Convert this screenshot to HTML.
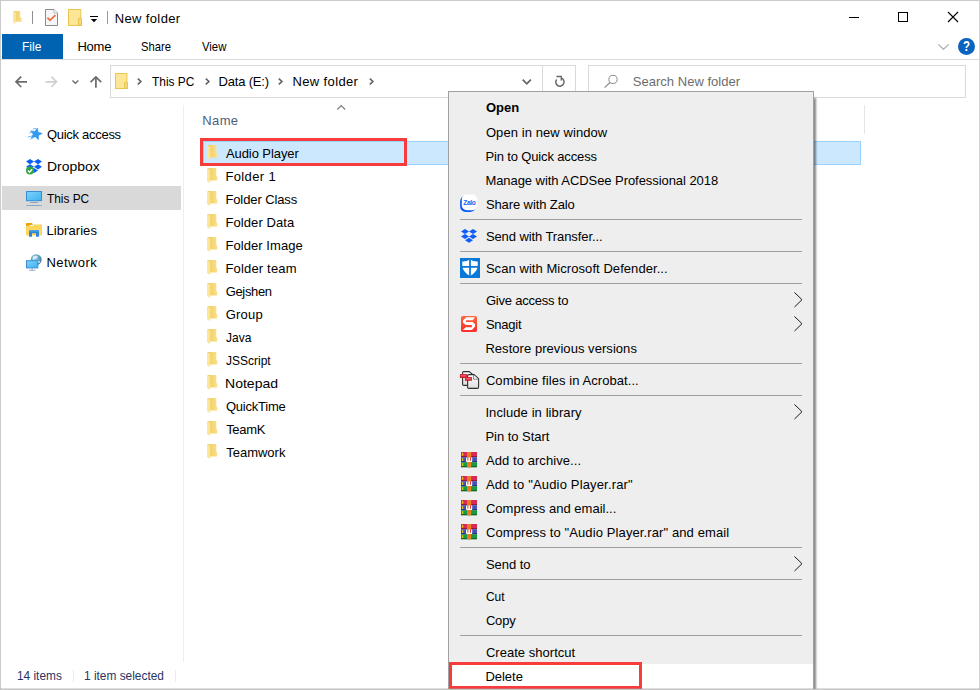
<!DOCTYPE html>
<html lang="en">
<head>
<meta charset="utf-8">
<title>New folder</title>
<style>
html,body{margin:0;padding:0;}
body{width:980px;height:690px;position:relative;overflow:hidden;background:#fff;
  font-family:"Liberation Sans",sans-serif;font-size:13px;color:#000;}
.a{position:absolute;}
.t{position:absolute;white-space:pre;font-size:13px;line-height:16px;color:#000;transform-origin:0 50%;}
.t.w{color:#fff;}
.t.g{color:#6d6d6d;}
.t.h{color:#4c607a;}
.t.s{color:#2a3563;}
.t.b{font-weight:bold;}
svg{position:absolute;overflow:visible;}
.sep{position:absolute;left:460px;width:342px;height:1px;background:#a0a0a0;}
</style>
</head>
<body>
<!-- window frame -->
<div class="a" style="left:0;top:0;width:980px;height:1px;background:#cbcbcb"></div>
<div class="a" style="left:0;top:0;width:1px;height:690px;background:#cbcbcb"></div>
<div class="a" style="left:979px;top:0;width:1px;height:690px;background:#d4d4d4"></div>

<!-- ribbon -->
<div class="a" style="left:2px;top:34px;width:61px;height:25px;background:#0063b1"></div>
<div class="a" style="left:1px;top:59px;width:978px;height:1px;background:#dadbdc"></div>

<!-- address bar -->
<div class="a" style="left:110px;top:65px;width:464px;height:31px;border:1px solid #d9d9d9;box-sizing:content-box"></div>
<div class="a" style="left:542px;top:66px;width:1px;height:31px;background:#d9d9d9"></div>
<div class="a" style="left:588px;top:65px;width:376px;height:31px;border:1px solid #d9d9d9"></div>

<!-- nav pane -->
<div class="a" style="left:2px;top:186px;width:179px;height:24px;background:#d9d9d9"></div>
<div class="a" style="left:183px;top:105px;width:1px;height:557px;background:#eeeeee"></div>

<!-- list header -->
<div class="a" style="left:864px;top:105px;width:1px;height:29px;background:#e5e5e5"></div>

<!-- selected row -->
<div class="a" style="left:203px;top:141px;width:658px;height:24px;background:#cce8ff;border:1px solid #99d1ff;box-sizing:border-box"></div>
<div class="a" style="left:200px;top:138px;width:207px;height:28px;border:3px solid #f83c3c;box-sizing:border-box"></div>

<!-- status bar -->
<div class="a" style="left:73px;top:670px;width:1px;height:12px;background:#ebebeb"></div>
<div class="a" style="left:175px;top:670px;width:1px;height:12px;background:#ebebeb"></div>

<!-- context menu -->
<div class="a" id="menu" style="left:448px;top:91px;width:366px;height:620px;background:#eeeeee;border:1px solid #a0a0a0;box-sizing:border-box;box-shadow:2.5px 6px 2px -0.5px rgba(0,0,0,0.47)"></div>
<div class="a" style="left:449px;top:664px;width:364px;height:25px;background:#fff"></div>
<div class="sep" style="top:219px"></div>
<div class="sep" style="top:251px"></div>
<div class="sep" style="top:283px"></div>
<div class="sep" style="top:363px"></div>
<div class="sep" style="top:395px"></div>
<div class="sep" style="top:547px"></div>
<div class="sep" style="top:579px"></div>
<div class="sep" style="top:635px"></div>
<div class="a" style="left:449px;top:662px;width:193px;height:27px;border:3px solid #f83c3c;box-sizing:border-box"></div>

<!-- bottom frame -->
<div class="a" style="left:0;top:689px;width:980px;height:1px;background:#c6c6c6"></div>
<div class="a" style="left:0;top:688px;width:980px;height:1px;background:rgba(160,160,160,0.35)"></div>

<svg width="0" height="0" style="position:absolute">
<defs>
<linearGradient id="gfb" x1="0" y1="0" x2="1" y2="0"><stop offset="0" stop-color="#eecb62"/><stop offset="1" stop-color="#fce088"/></linearGradient>
<linearGradient id="gmon" x1="0" y1="0" x2="1" y2="1"><stop offset="0" stop-color="#7fd4fb"/><stop offset="1" stop-color="#3fb0ef"/></linearGradient>
<linearGradient id="gsn" x1="0" y1="0" x2="0" y2="1"><stop offset="0" stop-color="#ff663c"/><stop offset="1" stop-color="#ff2b2b"/></linearGradient>
<linearGradient id="gdoc" x1="0" y1="0" x2="0" y2="1"><stop offset="0" stop-color="#ffffff"/><stop offset="1" stop-color="#dcdcdc"/></linearGradient>
<radialGradient id="gglobe" cx="0.4" cy="0.35" r="0.7"><stop offset="0" stop-color="#a8d8ee"/><stop offset="1" stop-color="#2a6f9f"/></radialGradient>
</defs>
</svg>

<!-- title bar icons -->
<svg style="left:12.5px;top:10.9px" width="9" height="14" viewBox="0 0 9 14">
  <path d="M0.2,0 L7.2,0 L7.2,6.6 L8.7,6.6 L8.7,10.8 L2.3,10.8 L2.3,1.8 Z" fill="url(#gfb)"/>
  <path d="M0,0.1 L2.5,2 L2.5,13.1 L0,11.2 Z" fill="#fbe597"/>
</svg>
<div class="a" style="left:32px;top:11px;width:1px;height:13px;background:#8f8f8f"></div>
<svg style="left:45px;top:9px" width="13" height="17" viewBox="0 0 13 17">
  <path d="M0.5,0.5 L9,0.5 L12.5,4 L12.5,16.5 L0.5,16.5 Z" fill="#f5f6f8" stroke="#8a8a8a" stroke-width="1"/>
  <path d="M9,0.5 L9,4 L12.5,4" fill="#fff" stroke="#a8a8a8" stroke-width="0.8"/>
  <path d="M2.4,8.6 L5,11.3 L10.4,6.1" fill="none" stroke="#f0703a" stroke-width="1.8"/>
</svg>
<svg style="left:68px;top:9px" width="14" height="17" viewBox="0 0 14 17">
  <rect x="0.5" y="0.5" width="12.3" height="16" fill="#fde796" stroke="#e9c650" stroke-width="1"/>
  <path d="M10.4,16.5 L10.4,10.2 Q10.4,9 11.6,9 L12.4,9 Q13.5,9 13.5,10.2 L13.5,16.5 Z" fill="#f6d978" stroke="#e3be48" stroke-width="0.9"/>
</svg>
<div class="a" style="left:90px;top:16px;width:8px;height:1px;background:#000"></div>
<svg style="left:90px;top:18px" width="8" height="5" viewBox="0 0 8 5"><path d="M0.8,0.9 L7.2,0.9 L4,4.2 Z" fill="#000"/></svg>
<div class="a" style="left:107px;top:11px;width:1px;height:13px;background:#9a9a9a"></div>

<!-- window controls -->
<div class="a" style="left:849px;top:17px;width:10px;height:1px;background:#000"></div>
<div class="a" style="left:898px;top:12px;width:10px;height:10px;border:1px solid #000;box-sizing:border-box"></div>
<svg style="left:948px;top:12px" width="10" height="10" viewBox="0 0 10 10"><path d="M0,0 L10,10 M10,0 L0,10" stroke="#000" stroke-width="1.1" fill="none"/></svg>
<svg style="left:938px;top:44px" width="11" height="6" viewBox="0 0 11 6"><path d="M0.3,0.3 L5.5,5.2 L10.7,0.3" stroke="#a6a6a6" stroke-width="1.1" fill="none"/></svg>
<div class="a" style="left:958px;top:38px;width:17px;height:17px;border-radius:50%;background:#0b63c0"></div>
<span class="t w b" style="left:963px;top:38px;font-size:14px;transform:scaleX(0.82)">?</span>

<!-- nav arrows -->
<svg style="left:15px;top:76px" width="13" height="12" viewBox="0 0 13 12"><path d="M12,5.8 L1.2,5.8 M6.2,0.6 L1,5.8 L6.2,11" fill="none" stroke="#6b6b6b" stroke-width="1.7"/></svg>
<svg style="left:45px;top:76px" width="13" height="12" viewBox="0 0 13 12"><path d="M0.5,5.8 L11.3,5.8 M6.3,0.6 L11.5,5.8 L6.3,11" fill="none" stroke="#d0d0d0" stroke-width="1.7"/></svg>
<svg style="left:72px;top:79.5px" width="7" height="4" viewBox="0 0 7 4"><path d="M0.4,0.4 L3.4,3.2 L6.4,0.4" fill="none" stroke="#6e6e6e" stroke-width="1.4"/></svg>
<svg style="left:90px;top:76px" width="12" height="12" viewBox="0 0 12 12"><path d="M5.9,11.8 L5.9,1 M0.6,6.2 L5.9,0.9 L11.2,6.2" fill="none" stroke="#6b6b6b" stroke-width="1.7"/></svg>

<!-- address bar icons -->
<svg style="left:115px;top:73px" width="13" height="16" viewBox="0 0 13 16">
  <rect x="0.5" y="0.5" width="11.4" height="15" fill="#fde796" stroke="#e9c650" stroke-width="1"/>
  <path d="M9.7,15.5 L9.7,10 Q9.7,9 10.7,9 L11.5,9 Q12.5,9 12.5,10 L12.5,15.5 Z" fill="#f6d978" stroke="#e3be48" stroke-width="0.9"/>
</svg>
<svg style="left:137px;top:78px" width="5" height="7" viewBox="0 0 5 7"><path d="M0.8,0.6 L3.9,3.5 L0.8,6.4" fill="none" stroke="#626262" stroke-width="1.6"/></svg>
<svg style="left:204.7px;top:78px" width="5" height="7" viewBox="0 0 5 7"><path d="M0.8,0.6 L3.9,3.5 L0.8,6.4" fill="none" stroke="#626262" stroke-width="1.6"/></svg>
<svg style="left:278.3px;top:78px" width="5" height="7" viewBox="0 0 5 7"><path d="M0.8,0.6 L3.9,3.5 L0.8,6.4" fill="none" stroke="#626262" stroke-width="1.6"/></svg>
<svg style="left:368.6px;top:78px" width="5" height="7" viewBox="0 0 5 7"><path d="M0.8,0.6 L3.9,3.5 L0.8,6.4" fill="none" stroke="#626262" stroke-width="1.6"/></svg>
<svg style="left:522px;top:79px" width="10" height="6" viewBox="0 0 10 6"><path d="M0.7,0.7 L4.8,4.8 L8.9,0.7" fill="none" stroke="#686868" stroke-width="1.85"/></svg>
<svg style="left:554px;top:75px" width="12" height="12" viewBox="0 0 12 12"><path d="M7.45,3.15 A4.15,4.15 0 1 1 2.63,4.45" fill="none" stroke="#6a6a6a" stroke-width="1.5"/><path d="M2.4,1.5 L7.3,1.5 L7.3,5.4" fill="none" stroke="#6a6a6a" stroke-width="1.4"/></svg>
<svg style="left:604px;top:74px" width="14" height="14" viewBox="0 0 14 14"><circle cx="9" cy="5.4" r="4.1" fill="none" stroke="#8a8a8a" stroke-width="1"/><path d="M6,8.5 L0.6,13.6" stroke="#8a8a8a" stroke-width="1.1"/></svg>

<!-- sort arrow -->
<svg style="left:336.5px;top:105px" width="9" height="5" viewBox="0 0 9 5"><path d="M0.3,4.5 L4.2,0.6 L8.1,4.5" fill="none" stroke="#7c7c7c" stroke-width="1.1"/></svg>

<!-- nav pane icons -->
<svg style="left:27px;top:127px" width="16" height="14" viewBox="0 0 16 14">
  <path d="M10.39,0.96 L11.15,5.13 L15.18,6.46 L11.44,8.47 L11.42,12.71 L8.36,9.78 L4.32,11.07 L6.16,7.25 L3.69,3.81 L7.89,4.38 Z" fill="#2f9bf2" stroke="#2487e2" stroke-width="0.5"/>
  <path d="M5.8,2 L9,1.5 M2.4,5.9 L5.8,5.3 M0.8,10 L4.8,9.1 M3.2,12.2 L6,11" stroke="#63b3f5" stroke-width="0.9" fill="none"/>
</svg>
<svg style="left:26px;top:158.6px" width="16" height="16" viewBox="0 0 16 16">
  <path d="M4,0 L8,2.6 L4,5.2 L0,2.6 Z M12,0 L16,2.6 L12,5.2 L8,2.6 Z M4,5.2 L8,7.8 L4,10.4 L0,7.8 Z M12,5.2 L16,7.8 L12,10.4 L8,7.8 Z M8,8.9 L12,11.5 L8,14.1 L4,11.5 Z" fill="#0d5ffa"/>
  <circle cx="4" cy="11.6" r="4" fill="#2fa53c"/>
  <path d="M1.9,11.6 L3.5,13.2 L6.2,10.2" fill="none" stroke="#fff" stroke-width="1.4"/>
</svg>
<svg style="left:26px;top:191px" width="16" height="15" viewBox="0 0 16 15">
  <rect x="0.5" y="0.5" width="15" height="9.2" fill="url(#gmon)" stroke="#3a8fd4" stroke-width="1"/>
  <rect x="4.2" y="11" width="7.6" height="1" fill="#8aa7c6"/>
  <rect x="0.3" y="14" width="15.4" height="1" fill="#8aa7c6"/>
</svg>
<svg style="left:26px;top:223px" width="16" height="14" viewBox="0 0 16 14">
  <path d="M0,0 L5.8,0 L7.2,1.6 L0,3.4 Z" fill="#e5a50a"/>
  <path d="M0,3 L6.6,3 L8,1.6 L16,1.6 L16,12.4 L0,12.4 Z" fill="#ffd65c"/>
  <path d="M3,13.8 L3,7 L13,7 L13,13.8 L10,13.8 L10,10.2 L6,10.2 L6,13.8 Z" fill="#2f86d8"/>
  <rect x="3" y="7" width="10" height="1.5" fill="#4fa3ea"/>
</svg>
<svg style="left:26px;top:253.5px" width="16" height="17" viewBox="0 0 16 17">
  <circle cx="10.2" cy="5.6" r="5.4" fill="url(#gglobe)"/>
  <path d="M7,2.6 Q9.4,1 11.8,2.2 Q11.4,4.4 9.2,4.4 Q8.6,6 6.6,5.8 Z M11.4,6.2 Q13.6,6.4 14.4,8.2 Q12.6,10 11,8.4 Z" fill="#e4f4fb" opacity="0.8"/>
  <rect x="0.5" y="6.7" width="11.3" height="7.2" fill="url(#gmon)" stroke="#3a8fd4" stroke-width="1"/>
  <rect x="5.4" y="14.2" width="1.4" height="1.6" fill="#8aa7c6"/>
  <rect x="3" y="15.8" width="6.4" height="0.9" fill="#8aa7c6"/>
</svg>

<!-- menu icons -->
<svg style="left:459px;top:194px" width="20" height="19" viewBox="0 0 20 19">
  <rect x="1.1" y="1.8" width="15.6" height="16.2" rx="5.6" fill="#0a5cf5"/>
  <rect x="2.8" y="0.5" width="15.6" height="15.7" rx="5" fill="#fff"/>
  <text x="10.4" y="10.9" font-family="Liberation Sans, sans-serif" font-weight="bold" font-size="6.6" fill="#1465f5" text-anchor="middle" letter-spacing="-0.3">Zalo</text>
</svg>
<svg style="left:461px;top:229px" width="16" height="14" viewBox="0 0 16 14">
  <path d="M4,0 L8,2.5 L4,5 L0,2.5 Z M12,0 L16,2.5 L12,5 L8,2.5 Z M4,5 L8,7.5 L4,10 L0,7.5 Z M12,5 L16,7.5 L12,10 L8,7.5 Z M8,8.7 L12,11.2 L8,13.7 L4,11.2 Z" fill="#0d5ffa"/>
</svg>
<svg style="left:460px;top:258px" width="20" height="20" viewBox="0 0 20 20">
  <rect x="0" y="0" width="20" height="20" fill="#0a78d6"/>
  <path d="M10,1.6 Q13.5,3.7 17.7,3.4 L17.7,8 Q17.4,14 10,17.9 Q2.6,14 2.3,8 L2.3,3.4 Q6.5,3.7 10,1.6 Z" fill="#fff"/>
  <path d="M10,1.2 L10,18.4 M1.8,8.9 L18.2,8.9" stroke="#0a78d6" stroke-width="1.75"/>
</svg>
<svg style="left:461px;top:316px" width="16" height="16" viewBox="0 0 16 16">
  <rect x="0" y="0" width="16" height="16" rx="1.7" fill="url(#gsn)"/>
  <path d="M5.2,1.3 L14,1.3 L11.7,4.35 L5,4.35 L5,5.9 L11.8,5.9 L14,8.2 L14,10.6 L11,14.1 L1.8,14.1 L4.7,11.3 L10.9,11.3 L10.9,9.1 L4.7,9.1 L2,6.6 L2,4.4 Z" fill="#fff"/>
</svg>
<svg style="left:455px;top:366px" width="30" height="28" viewBox="0 0 30 28">
  <path d="M8.8,5.6 L14.2,5.6 L17.4,8.2 L17.4,19.4 L8.8,19.4 Q7.6,19.4 7.6,18.2 L7.6,6.8 Q7.6,5.6 8.8,5.6 Z" fill="url(#gdoc)" stroke="#2e2e2e" stroke-width="1.1"/>
  <path d="M13.8,8.6 L19,8.6 L23.6,12.8 L23.6,21.2 Q23.6,22.4 22.4,22.4 L13.8,22.4 Q12.6,22.4 12.6,21.2 L12.6,9.8 Q12.6,8.6 13.8,8.6 Z" fill="url(#gdoc)" stroke="#2e2e2e" stroke-width="1.1"/>
  <path d="M18.6,9 L18.6,13.1 L23.2,13.1" fill="#fff" stroke="#666" stroke-width="0.8"/>
  <rect x="4.9" y="8.1" width="7.3" height="3.9" fill="#cf1f2e"/>
  <rect x="9.9" y="11" width="7" height="3.8" fill="#cf1f2e"/>
  <rect x="5.7" y="9" width="5.6" height="1.5" fill="#ee5a66"/>
  <rect x="10.7" y="11.9" width="5.4" height="1.5" fill="#ee5a66"/>
</svg>
<svg style="left:461px;top:452px" width="16" height="15" viewBox="0 0 16 15"><rect x="0" y="0" width="16" height="5" fill="#d32c57"/>
  <rect x="0" y="4.3" width="16" height="0.9" fill="#7c1230"/>
  <rect x="0" y="5.2" width="16" height="5" fill="#4b50b8"/>
  <rect x="0" y="9.3" width="16" height="0.9" fill="#23256e"/>
  <rect x="0" y="10.2" width="16" height="5" fill="#159c40"/>
  <rect x="0" y="14.3" width="16" height="0.9" fill="#0a5a1f"/>
  <rect x="6" y="0" width="4.2" height="15.2" fill="#f0781f"/>
  <rect x="5" y="5.6" width="6.2" height="4.4" rx="0.8" fill="#fff"/>
  <rect x="6.4" y="5.2" width="0.9" height="3.6" fill="#e03010"/><rect x="9" y="5.2" width="0.9" height="3.6" fill="#e03010"/>
  <rect x="1.2" y="1" width="1" height="2.8" fill="#ffd800"/><rect x="1.2" y="6.2" width="1" height="2.8" fill="#ffd800"/><rect x="1.2" y="11.2" width="1" height="2.8" fill="#ffd800"/></svg>
<svg style="left:461px;top:476px" width="16" height="15" viewBox="0 0 16 15"><rect x="0" y="0" width="16" height="5" fill="#d32c57"/>
  <rect x="0" y="4.3" width="16" height="0.9" fill="#7c1230"/>
  <rect x="0" y="5.2" width="16" height="5" fill="#4b50b8"/>
  <rect x="0" y="9.3" width="16" height="0.9" fill="#23256e"/>
  <rect x="0" y="10.2" width="16" height="5" fill="#159c40"/>
  <rect x="0" y="14.3" width="16" height="0.9" fill="#0a5a1f"/>
  <rect x="6" y="0" width="4.2" height="15.2" fill="#f0781f"/>
  <rect x="5" y="5.6" width="6.2" height="4.4" rx="0.8" fill="#fff"/>
  <rect x="6.4" y="5.2" width="0.9" height="3.6" fill="#e03010"/><rect x="9" y="5.2" width="0.9" height="3.6" fill="#e03010"/>
  <rect x="1.2" y="1" width="1" height="2.8" fill="#ffd800"/><rect x="1.2" y="6.2" width="1" height="2.8" fill="#ffd800"/><rect x="1.2" y="11.2" width="1" height="2.8" fill="#ffd800"/></svg>
<svg style="left:461px;top:500px" width="16" height="15" viewBox="0 0 16 15"><rect x="0" y="0" width="16" height="5" fill="#d32c57"/>
  <rect x="0" y="4.3" width="16" height="0.9" fill="#7c1230"/>
  <rect x="0" y="5.2" width="16" height="5" fill="#4b50b8"/>
  <rect x="0" y="9.3" width="16" height="0.9" fill="#23256e"/>
  <rect x="0" y="10.2" width="16" height="5" fill="#159c40"/>
  <rect x="0" y="14.3" width="16" height="0.9" fill="#0a5a1f"/>
  <rect x="6" y="0" width="4.2" height="15.2" fill="#f0781f"/>
  <rect x="5" y="5.6" width="6.2" height="4.4" rx="0.8" fill="#fff"/>
  <rect x="6.4" y="5.2" width="0.9" height="3.6" fill="#e03010"/><rect x="9" y="5.2" width="0.9" height="3.6" fill="#e03010"/>
  <rect x="1.2" y="1" width="1" height="2.8" fill="#ffd800"/><rect x="1.2" y="6.2" width="1" height="2.8" fill="#ffd800"/><rect x="1.2" y="11.2" width="1" height="2.8" fill="#ffd800"/></svg>
<svg style="left:461px;top:524px" width="16" height="15" viewBox="0 0 16 15"><rect x="0" y="0" width="16" height="5" fill="#d32c57"/>
  <rect x="0" y="4.3" width="16" height="0.9" fill="#7c1230"/>
  <rect x="0" y="5.2" width="16" height="5" fill="#4b50b8"/>
  <rect x="0" y="9.3" width="16" height="0.9" fill="#23256e"/>
  <rect x="0" y="10.2" width="16" height="5" fill="#159c40"/>
  <rect x="0" y="14.3" width="16" height="0.9" fill="#0a5a1f"/>
  <rect x="6" y="0" width="4.2" height="15.2" fill="#f0781f"/>
  <rect x="5" y="5.6" width="6.2" height="4.4" rx="0.8" fill="#fff"/>
  <rect x="6.4" y="5.2" width="0.9" height="3.6" fill="#e03010"/><rect x="9" y="5.2" width="0.9" height="3.6" fill="#e03010"/>
  <rect x="1.2" y="1" width="1" height="2.8" fill="#ffd800"/><rect x="1.2" y="6.2" width="1" height="2.8" fill="#ffd800"/><rect x="1.2" y="11.2" width="1" height="2.8" fill="#ffd800"/></svg>

<!-- submenu arrows -->
<svg style="left:793.5px;top:291.6px" width="9" height="16" viewBox="0 0 9 16"><path d="M0.5,0.5 L8,7.7 L0.5,15" fill="none" stroke="#1a1a1a" stroke-width="1"/></svg>
<svg style="left:793.5px;top:315.6px" width="9" height="16" viewBox="0 0 9 16"><path d="M0.5,0.5 L8,7.7 L0.5,15" fill="none" stroke="#1a1a1a" stroke-width="1"/></svg>
<svg style="left:793.5px;top:403.6px" width="9" height="16" viewBox="0 0 9 16"><path d="M0.5,0.5 L8,7.7 L0.5,15" fill="none" stroke="#1a1a1a" stroke-width="1"/></svg>
<svg style="left:793.5px;top:555.6px" width="9" height="16" viewBox="0 0 9 16"><path d="M0.5,0.5 L8,7.7 L0.5,15" fill="none" stroke="#1a1a1a" stroke-width="1"/></svg>

<!-- file icons -->
<svg style="left:207px;top:144.75px" width="11" height="16" viewBox="0 0 11 16"><path d="M0.2,0 L9.3,0 L9.3,8.2 L10.2,8.2 L10.2,12.4 L3,12.4 L3,2.2 Z" fill="url(#gfb)"/>
  <path d="M0,0.1 L3.2,2.4 L3.2,15.2 L0,12.9 Z" fill="#fbe597"/></svg>
<svg style="left:207px;top:167.75px" width="11" height="16" viewBox="0 0 11 16"><path d="M0.2,0 L9.3,0 L9.3,8.2 L10.2,8.2 L10.2,12.4 L3,12.4 L3,2.2 Z" fill="url(#gfb)"/>
  <path d="M0,0.1 L3.2,2.4 L3.2,15.2 L0,12.9 Z" fill="#fbe597"/></svg>
<svg style="left:207px;top:190.75px" width="11" height="16" viewBox="0 0 11 16"><path d="M0.2,0 L9.3,0 L9.3,8.2 L10.2,8.2 L10.2,12.4 L3,12.4 L3,2.2 Z" fill="url(#gfb)"/>
  <path d="M0,0.1 L3.2,2.4 L3.2,15.2 L0,12.9 Z" fill="#fbe597"/></svg>
<svg style="left:207px;top:213.75px" width="11" height="16" viewBox="0 0 11 16"><path d="M0.2,0 L9.3,0 L9.3,8.2 L10.2,8.2 L10.2,12.4 L3,12.4 L3,2.2 Z" fill="url(#gfb)"/>
  <path d="M0,0.1 L3.2,2.4 L3.2,15.2 L0,12.9 Z" fill="#fbe597"/></svg>
<svg style="left:207px;top:236.75px" width="11" height="16" viewBox="0 0 11 16"><path d="M0.2,0 L9.3,0 L9.3,8.2 L10.2,8.2 L10.2,12.4 L3,12.4 L3,2.2 Z" fill="url(#gfb)"/>
  <path d="M0,0.1 L3.2,2.4 L3.2,15.2 L0,12.9 Z" fill="#fbe597"/></svg>
<svg style="left:207px;top:259.75px" width="11" height="16" viewBox="0 0 11 16"><path d="M0.2,0 L9.3,0 L9.3,8.2 L10.2,8.2 L10.2,12.4 L3,12.4 L3,2.2 Z" fill="url(#gfb)"/>
  <path d="M0,0.1 L3.2,2.4 L3.2,15.2 L0,12.9 Z" fill="#fbe597"/></svg>
<svg style="left:207px;top:282.75px" width="11" height="16" viewBox="0 0 11 16"><path d="M0.2,0 L9.3,0 L9.3,8.2 L10.2,8.2 L10.2,12.4 L3,12.4 L3,2.2 Z" fill="url(#gfb)"/>
  <path d="M0,0.1 L3.2,2.4 L3.2,15.2 L0,12.9 Z" fill="#fbe597"/></svg>
<svg style="left:207px;top:305.75px" width="11" height="16" viewBox="0 0 11 16"><path d="M0.2,0 L9.3,0 L9.3,8.2 L10.2,8.2 L10.2,12.4 L3,12.4 L3,2.2 Z" fill="url(#gfb)"/>
  <path d="M0,0.1 L3.2,2.4 L3.2,15.2 L0,12.9 Z" fill="#fbe597"/></svg>
<svg style="left:207px;top:328.75px" width="11" height="16" viewBox="0 0 11 16"><path d="M0.2,0 L9.3,0 L9.3,8.2 L10.2,8.2 L10.2,12.4 L3,12.4 L3,2.2 Z" fill="url(#gfb)"/>
  <path d="M0,0.1 L3.2,2.4 L3.2,15.2 L0,12.9 Z" fill="#fbe597"/></svg>
<svg style="left:207px;top:351.75px" width="11" height="16" viewBox="0 0 11 16"><path d="M0.2,0 L9.3,0 L9.3,8.2 L10.2,8.2 L10.2,12.4 L3,12.4 L3,2.2 Z" fill="url(#gfb)"/>
  <path d="M0,0.1 L3.2,2.4 L3.2,15.2 L0,12.9 Z" fill="#fbe597"/></svg>
<svg style="left:207px;top:374.75px" width="11" height="16" viewBox="0 0 11 16"><path d="M0.2,0 L9.3,0 L9.3,8.2 L10.2,8.2 L10.2,12.4 L3,12.4 L3,2.2 Z" fill="url(#gfb)"/>
  <path d="M0,0.1 L3.2,2.4 L3.2,15.2 L0,12.9 Z" fill="#fbe597"/></svg>
<svg style="left:207px;top:397.75px" width="11" height="16" viewBox="0 0 11 16"><path d="M0.2,0 L9.3,0 L9.3,8.2 L10.2,8.2 L10.2,12.4 L3,12.4 L3,2.2 Z" fill="url(#gfb)"/>
  <path d="M0,0.1 L3.2,2.4 L3.2,15.2 L0,12.9 Z" fill="#fbe597"/></svg>
<svg style="left:207px;top:420.75px" width="11" height="16" viewBox="0 0 11 16"><path d="M0.2,0 L9.3,0 L9.3,8.2 L10.2,8.2 L10.2,12.4 L3,12.4 L3,2.2 Z" fill="url(#gfb)"/>
  <path d="M0,0.1 L3.2,2.4 L3.2,15.2 L0,12.9 Z" fill="#fbe597"/></svg>
<svg style="left:207px;top:443.75px" width="11" height="16" viewBox="0 0 11 16"><path d="M0.2,0 L9.3,0 L9.3,8.2 L10.2,8.2 L10.2,12.4 L3,12.4 L3,2.2 Z" fill="url(#gfb)"/>
  <path d="M0,0.1 L3.2,2.4 L3.2,15.2 L0,12.9 Z" fill="#fbe597"/></svg>


<span class="t" style="left:114.7px;top:11px;letter-spacing:0.37px">New folder</span>
<span class="t w" style="left:21.5px;top:39px;transform:scaleX(0.923)">File</span>
<span class="t" style="left:77.4px;top:39px;letter-spacing:-0.20px">Home</span>
<span class="t" style="left:141.1px;top:39px;transform:scaleX(0.863)">Share</span>
<span class="t" style="left:202.4px;top:39px;transform:scaleX(0.872)">View</span>
<span class="t" style="left:152.2px;top:74px;transform:scaleX(0.916)">This PC</span>
<span class="t" style="left:218.6px;top:74px;letter-spacing:-0.20px">Data (E:)</span>
<span class="t" style="left:292.4px;top:74px;letter-spacing:0.38px">New folder</span>
<span class="t g" style="left:632.8px;top:74px;letter-spacing:0.02px">Search New folder</span>
<span class="t" style="left:47.0px;top:127px;letter-spacing:-0.29px">Quick access</span>
<span class="t" style="left:46.9px;top:159px;transform:scaleX(1.073)">Dropbox</span>
<span class="t" style="left:47.2px;top:191px;transform:scaleX(0.912)">This PC</span>
<span class="t" style="left:46.5px;top:223px;letter-spacing:0.07px">Libraries</span>
<span class="t" style="left:46.5px;top:255px;letter-spacing:0.41px">Network</span>
<span class="t h" style="left:202.3px;top:113px;letter-spacing:0.37px">Name</span>
<span class="t" style="left:225.9px;top:146px;letter-spacing:-0.07px">Audio Player</span>
<span class="t" style="left:225.4px;top:169px;letter-spacing:0.38px">Folder 1</span>
<span class="t" style="left:225.4px;top:192px;letter-spacing:-0.10px">Folder Class</span>
<span class="t" style="left:225.4px;top:215px;letter-spacing:0.10px">Folder Data</span>
<span class="t" style="left:225.4px;top:238px;letter-spacing:0.07px">Folder Image</span>
<span class="t" style="left:225.4px;top:261px;letter-spacing:0.18px">Folder team</span>
<span class="t" style="left:225.7px;top:284px;letter-spacing:-0.34px">Gejshen</span>
<span class="t" style="left:225.7px;top:307px;letter-spacing:0.20px">Group</span>
<span class="t" style="left:226.2px;top:330px;transform:scaleX(0.923)">Java</span>
<span class="t" style="left:226.2px;top:353px;transform:scaleX(0.923)">JSScript</span>
<span class="t" style="left:225.3px;top:376px;transform:scaleX(1.079)">Notepad</span>
<span class="t" style="left:225.9px;top:399px;letter-spacing:-0.21px">QuickTime</span>
<span class="t" style="left:226.2px;top:422px;letter-spacing:-0.33px">TeamK</span>
<span class="t" style="left:226.2px;top:445px;letter-spacing:0.00px">Teamwork</span>
<span class="t s" style="left:17.3px;top:668px;transform:scaleX(0.912)">14 items</span>
<span class="t s" style="left:84.0px;top:668px;transform:scaleX(0.914)">1 item selected</span>
<span class="t b" style="left:485.9px;top:100px;letter-spacing:0.02px">Open</span>
<span class="t" style="left:485.9px;top:125px;letter-spacing:0.08px">Open in new window</span>
<span class="t" style="left:485.4px;top:149px;letter-spacing:-0.14px">Pin to Quick access</span>
<span class="t" style="left:485.4px;top:173px;letter-spacing:-0.06px">Manage with ACDSee Professional 2018</span>
<span class="t" style="left:485.9px;top:197px;letter-spacing:-0.10px">Share with Zalo</span>
<span class="t" style="left:485.9px;top:229px;letter-spacing:-0.09px">Send with Transfer...</span>
<span class="t" style="left:485.9px;top:261px;letter-spacing:0.06px">Scan with Microsoft Defender...</span>
<span class="t" style="left:485.9px;top:293px;letter-spacing:-0.21px">Give access to</span>
<span class="t" style="left:485.9px;top:317px;letter-spacing:-0.25px">Snagit</span>
<span class="t" style="left:485.4px;top:341px;letter-spacing:0.05px">Restore previous versions</span>
<span class="t" style="left:485.9px;top:373px;letter-spacing:0.07px">Combine files in Acrobat...</span>
<span class="t" style="left:485.4px;top:405px;letter-spacing:0.09px">Include in library</span>
<span class="t" style="left:485.4px;top:429px;letter-spacing:-0.02px">Pin to Start</span>
<span class="t" style="left:485.9px;top:453px;letter-spacing:0.08px">Add to archive...</span>
<span class="t" style="left:485.9px;top:477px;letter-spacing:0.16px">Add to "Audio Player.rar"</span>
<span class="t" style="left:485.9px;top:501px;letter-spacing:0.02px">Compress and email...</span>
<span class="t" style="left:485.9px;top:525px;letter-spacing:0.11px">Compress to "Audio Player.rar" and email</span>
<span class="t" style="left:485.9px;top:557px;letter-spacing:-0.04px">Send to</span>
<span class="t" style="left:485.9px;top:589px;transform:scaleX(0.917)">Cut</span>
<span class="t" style="left:485.9px;top:613px;letter-spacing:-0.18px">Copy</span>
<span class="t" style="left:485.9px;top:645px;letter-spacing:0.03px">Create shortcut</span>
<span class="t" style="left:485.4px;top:669px;letter-spacing:-0.02px">Delete</span>
</body>
</html>
